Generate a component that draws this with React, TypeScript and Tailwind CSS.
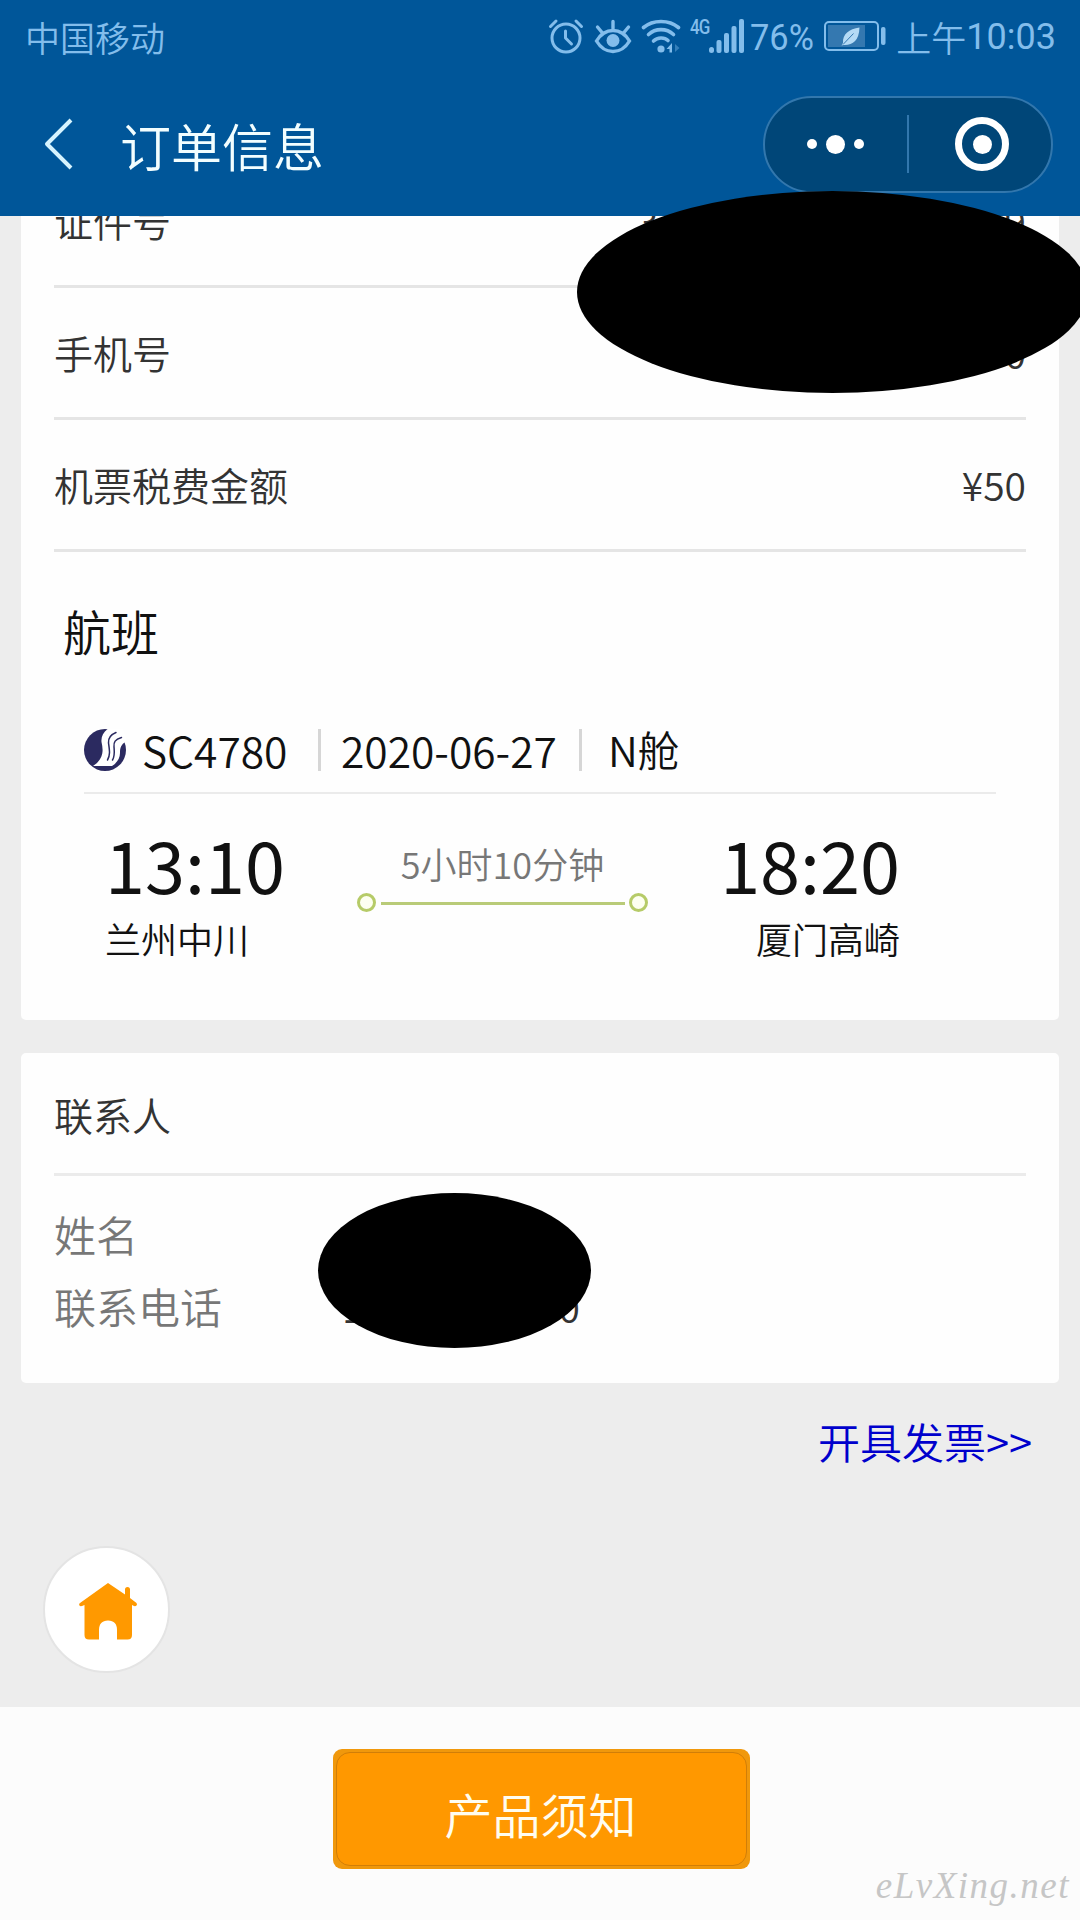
import type { ReactNode } from "react";

function AlarmIcon() {
  return (
    <svg className="h-[36px] w-[36px]" viewBox="0 0 36 36" fill="none" stroke="currentColor" strokeWidth="3" strokeLinecap="round">
      <circle cx="18" cy="20" r="14" />
      <path d="M2.500 8.500 8 3M33.500 8.500 28 3" />
      <path d="M17.500 13v7l6 6" strokeLinejoin="round" />
    </svg>
  );
}

function EyeIcon() {
  return (
    <svg className="h-[36px] w-[38px]" viewBox="0 0 38 36" fill="none" stroke="currentColor" strokeWidth="3.400" strokeLinecap="round">
      <path d="M2.500 23C7 15.500 13 12.500 19 12.500S31 15.500 35.500 23C31 30.500 25 33.500 19 33.500S7 30.500 2.500 23Z" />
      <circle cx="19" cy="22.500" r="6.500" fill="currentColor" stroke="none" />
      <path d="M19 3.500v7M3.500 9l5 6M34.500 9l-5 6" />
    </svg>
  );
}

function WifiIcon() {
  return (
    <svg className="h-[36px] w-[40px]" viewBox="0 0 40 36" fill="none" stroke="currentColor" strokeWidth="3.600" strokeLinecap="round">
      <path d="M2.500 9.500C12 1.500 28 1.500 37.500 9.500" />
      <path d="M7.500 16.500C14.500 10 25.500 10 32.500 16.500" />
      <path d="M12.500 23C16.500 19 23.500 19 27 22.500" />
      <circle cx="20" cy="31" r="3.600" fill="currentColor" stroke="none" />
      <path d="M31 25v9.500h-2.500V31H25.500Z" fill="currentColor" stroke="none" />
      <path d="M34 26v8l4.500-4Z" fill="currentColor" stroke="none" opacity=".4" />
    </svg>
  );
}

function SignalIcon() {
  return (
    <svg className="h-[36px] w-[36px]" viewBox="0 0 36 36" fill="currentColor">
      <rect x="0" y="29" width="5" height="6" rx="2.500" />
      <rect x="7.500" y="22" width="5" height="13" rx="2" />
      <rect x="15" y="15" width="5" height="20" rx="2" />
      <rect x="22.500" y="8" width="5" height="27" rx="2" />
      <rect x="30" y="1" width="5" height="34" rx="2" />
    </svg>
  );
}

function BatteryIcon() {
  return (
    <svg className="h-[30px] w-[63px]" viewBox="0 0 63 30">
      <rect x="1" y="1" width="53" height="28" rx="4" fill="none" stroke="currentColor" strokeWidth="2" />
      <rect x="4" y="4" width="37" height="22" fill="#3478b0" />
      <rect x="57" y="6" width="4.500" height="18" rx="2" fill="currentColor" />
      <path d="M35.500 6.500C25 8 18.500 13 19 22l-1.500 2.500L19.500 24c9 .5 15.500-4 16-17.500Z" fill="#b4daf5" />
      <path d="M19 23.500 29.500 12.500" stroke="#3478b0" strokeWidth="1" />
    </svg>
  );
}

function AirlineLogo() {
  return (
    <svg className="h-[42px] w-[42px]" viewBox="0 0 42 42">
      <circle cx="21" cy="21" r="21" fill="#2b2a60" />
      <path
        d="M25 -1C19.500 3 17 7 17.500 13 19 20 20 27 13 34L9 37H28C33 34 36 29 36 24 36 19 37 15 43 12L38 -2Z"
        fill="#fff"
      />
      <g fill="none" stroke="#2b2a60" strokeWidth="1.500" strokeLinecap="round">
        <path d="M32 3.500C26 6 24 9 24.500 14 25.500 21 26.500 26 23.500 31" />
        <path d="M37.500 8.500C31 10.500 29.500 13 30 18 30.500 24 31 27 28.500 31" />
      </g>
    </svg>
  );
}

function HomeIcon() {
  return (
    <svg className="h-[58px] w-[60px]" viewBox="0 0 60 58" fill="#ff9900">
      <path d="M30 1 47 12.500V7.500Q47 5 49.500 5T52 7.500V16L58.500 21Q59.500 22.500 58.500 23.500T56 24L54 23V53Q54 57.500 49.500 57.500H39V48C39 42 36 38.500 30 38.500S21 42 21 48V57.500H11Q6.500 57.500 6.500 53V23L4 24Q2 24.500 1.300 23.300T2 21Z" />
    </svg>
  );
}

function Row({ label, children }: { label: string; children: ReactNode }) {
  return (
    <div className="flex h-[132px] items-center justify-between border-b-3 border-[#e5e5e5] text-[39px] text-[#333]">
      <span>{label}</span>
      {children}
    </div>
  );
}

export default function App() {
  return (
    <div className="relative flex h-[1920px] w-[1080px] flex-col overflow-hidden bg-[#ededed] font-['Noto_Sans_CJK_SC',sans-serif] leading-none font-[350]">
      <header className="h-[216px] shrink-0 bg-[#005699]">
        {/* Status bar */}
        <div className="flex h-[72px] items-center justify-between pr-[24px] pl-[25px] text-[#83bdeb]">
          <span className="text-[35px]">中国移动</span>
          <div className="flex items-center">
            <AlarmIcon />
            <div className="ml-[10px]">
              <EyeIcon />
            </div>
            <div className="ml-[9px]">
              <WifiIcon />
            </div>
            <span className="mb-[19px] ml-[9px] w-[19px] origin-left scale-x-85 font-['Roboto',sans-serif] text-[20px] font-medium tracking-tighter">4G</span>
            <SignalIcon />
            <span className="mt-[2px] ml-[5px] w-[70px] origin-left scale-x-93 font-['Roboto',sans-serif] text-[37px] font-normal">76%</span>
            <div className="ml-[4px]">
              <BatteryIcon />
            </div>
            <span className="ml-[9px] text-[35px]">上午</span>
            <span className="mt-[2px] font-['Roboto',sans-serif] text-[36px] font-normal">10:03</span>
          </div>
        </div>

        {/* Title bar */}
        <div className="flex h-[144px] items-center pr-[27px] pl-[43px]">
          <svg className="h-[52px] w-[30px]" viewBox="0 0 30 52" fill="none" stroke="#d6f4ff" strokeWidth="4">
            <path d="M28 2 4 26 28 50" strokeLinejoin="round" />
          </svg>
          <h1 className="mt-[2px] ml-[47px] text-[51px] text-[#f2feff]">订单信息</h1>
          <div className="ml-auto flex h-[97px] w-[290px] items-center rounded-full border-2 border-[#3277ad] bg-[#004678]">
            <div className="flex w-[140px] items-center justify-center gap-[9px]">
              <i className="size-[10px] rounded-full bg-white" />
              <i className="size-[19px] rounded-full bg-white" />
              <i className="size-[10px] rounded-full bg-white" />
            </div>
            <div className="ml-[2px] h-[58px] w-[2px] bg-[#3277ad]" />
            <div className="ml-[46px] flex size-[54px] items-center justify-center rounded-full border-7 border-white">
              <i className="size-[19px] rounded-full bg-white" />
            </div>
          </div>
        </div>
      </header>

      <main className="flex-1 overflow-hidden px-[21px]">
        {/* Passenger and flight */}
        <section className="h-[804px] overflow-hidden rounded-b-[5px] bg-[#fefefe] px-[33px]">
          <div className="-mt-[60px]">
            <Row label="证件号">
              <span className="flex w-[389px] justify-between">
                <span>3</span>
                <span>9</span>
              </span>
            </Row>
            <Row label="手机号">
              <span>0</span>
            </Row>
            <Row label="机票税费金额">
              <span>¥50</span>
            </Row>
          </div>

          <h2 className="mt-[54px] ml-[9px] text-[48px] text-[#111]">航班</h2>
          <div className="mr-[30px] ml-[30px]">
            <div className="mt-[57px] flex h-[83px] items-center border-b-2 border-[#ebebeb] text-[#111]">
              <div className="-mt-[3px]">
                <AirlineLogo />
              </div>
              <span className="-mt-[3px] ml-[16px] w-[176px] text-[42.500px]">SC4780</span>
              <div className="-mt-[3px] h-[42px] w-[3px] bg-[#d6d6d6]" />
              <span className="-mt-[3px] ml-[20px] w-[238px] text-[42.500px]">2020-06-27</span>
              <div className="-mt-[3px] h-[42px] w-[3px] bg-[#d6d6d6]" />
              <span className="-mt-[3px] ml-[26px] text-[41.500px]">N舱</span>
            </div>

            <div className="mt-[33px] flex pr-[96px] pl-[21px] text-[#111]">
              <div className="w-[252px]">
                <div className="h-[93px] text-[72px] font-normal">13:10</div>
                <div className="text-[36px]">兰州中川</div>
              </div>
              <div className="flex w-[291px] flex-col items-center">
                <div className="mt-[18px] text-[36px] text-[#777]">5小时10分钟</div>
                <div className="mt-[12px] flex w-full items-center justify-between">
                  <i className="size-[19px] rounded-full border-3 border-[#b6cb68] bg-[#fdfff0]" />
                  <i className="mt-px h-[3px] w-[244px] bg-[#b9cb78]" />
                  <i className="size-[19px] rounded-full border-3 border-[#b6cb68] bg-[#fdfff0]" />
                </div>
              </div>
              <div className="ml-auto text-right">
                <div className="h-[93px] text-[72px] font-normal">18:20</div>
                <div className="text-[36px]">厦门高崎</div>
              </div>
            </div>
          </div>
        </section>

        {/* Contact */}
        <section className="mt-[33px] h-[330px] rounded-[5px] bg-[#fefefe] px-[33px]">
          <h2 className="flex h-[123px] items-center border-b-3 border-[#ebebeb] pt-[3px] text-[39px] text-[#333]">联系人</h2>
          <div className="mt-[22px] flex h-[72px] items-center text-[42px] text-[#777]">姓名</div>
          <div className="flex h-[72px] items-center text-[42px] text-[#777]">
            <span className="w-[288px]">联系电话</span>
            <span className="flex w-[238px] justify-between text-[39px] text-[#333]">
              <span>1</span>
              <span>0</span>
            </span>
          </div>
        </section>

        <div className="mt-[37px] pr-[27px] text-right text-[42px] text-[#0000cc]">开具发票&gt;&gt;</div>

        <button className="mt-[84px] ml-[22px] flex size-[127px] items-center justify-center rounded-full border-2 border-[#e4e4e4] bg-white">
          <span className="pt-[2px] pl-[2px]">
            <HomeIcon />
          </span>
        </button>
      </main>

      <footer className="flex h-[213px] shrink-0 justify-center bg-[#fcfcfc] pt-[42px] pl-[3px]">
        <button className="h-[120px] w-[417px] rounded-[9px] bg-[#f0980c] p-[3px]">
          <span className="flex h-full items-center justify-center rounded-[14px] border border-[#d17e08] bg-[#ff9800] pt-[8px] pr-[2px] text-[48px] text-[#fffdf0]">
            产品须知
          </span>
        </button>
      </footer>

      {/* Masks over private data */}
      <div className="absolute top-[191px] left-[577px] h-[202px] w-[511px] rounded-[50%] bg-black" />
      <div className="absolute top-[1193px] left-[318px] h-[155px] w-[273px] rounded-[50%] bg-black" />

      <div className="absolute right-[10px] bottom-[16px] font-['Liberation_Serif',serif] text-[37px] tracking-[1.500px] text-[#c6c6c6] italic">
        eLvXing.net
      </div>
    </div>
  );
}
